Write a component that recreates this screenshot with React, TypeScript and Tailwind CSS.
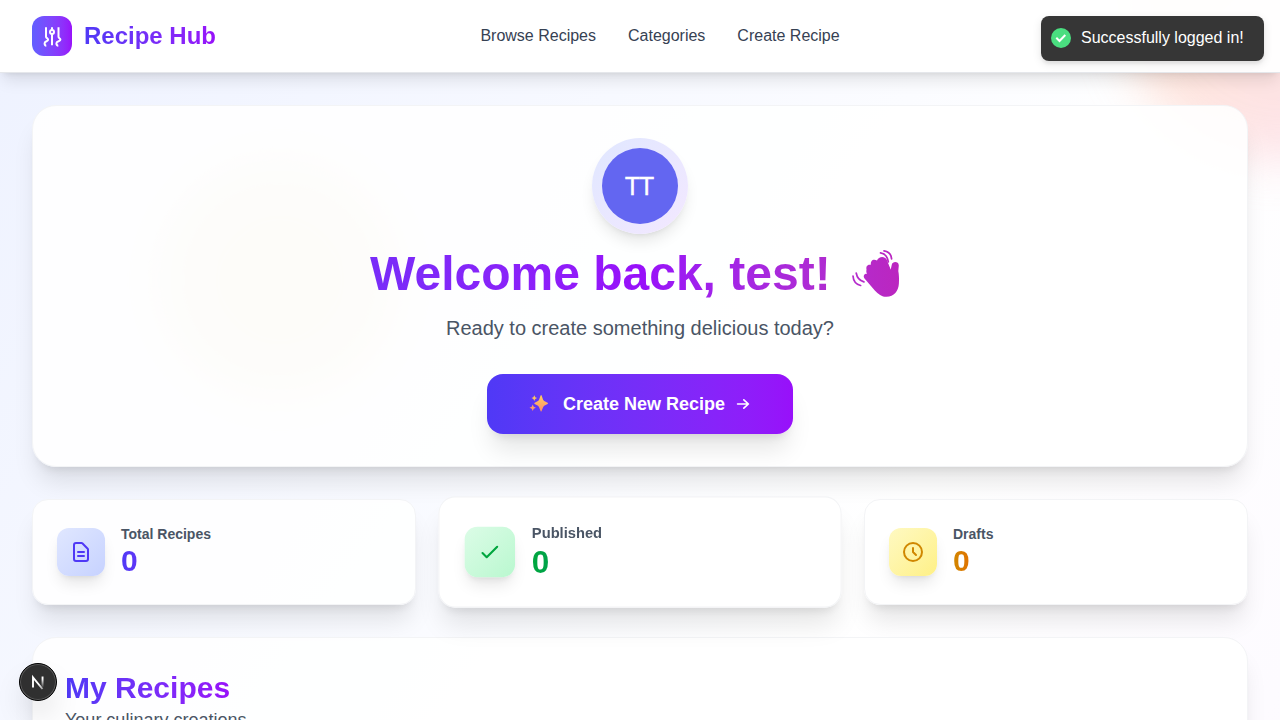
import type { ReactNode } from "react";

const glass = "border border-gray-100 bg-white/90 shadow-xl";

function NavLink({ children }: { children: ReactNode }) {
  return <a className="text-base text-gray-700">{children}</a>;
}

function Header() {
  return (
    <header className="relative z-10 flex h-[73px] items-center justify-between border-b border-gray-200 bg-white/95 px-8 shadow-lg">
      <div className="flex items-center gap-3">
        <div className="flex size-10 items-center justify-center rounded-xl bg-gradient-to-r from-[#615fff] to-[#9810fa]">
          <svg className="size-6" viewBox="0 0 24 24" fill="none" stroke="white" strokeWidth="2">
            <path d="M6 3.300v9.400c0 1.600 2.100 1.400 2.100 3.100s-3.500 1.300-3.500 3.500c0 1.500.7 2.400 1.700 2.400M12 3.300v2.500m0 4.400v11M18.500 3.300v9.400c0 1.600 1.900 1.400 1.900 3.100s-4 1.300-4 3.500c0 1.500.8 2.400 1.900 2.400" />
            <circle cx="12" cy="8" r="2" />
          </svg>
        </div>
        <span className="bg-gradient-to-r from-[#4f39f6] to-[#9810fa] bg-clip-text text-2xl font-bold text-transparent">
          Recipe Hub
        </span>
      </div>
      <nav className="flex gap-8">
        <NavLink>Browse Recipes</NavLink>
        <NavLink>Categories</NavLink>
        <NavLink>Create Recipe</NavLink>
      </nav>
      <div className="w-36" />
    </header>
  );
}

function Toast() {
  return (
    <div className="absolute top-4 right-4 z-20 flex h-[45px] w-[223px] items-center rounded-lg bg-[#363636] pb-0.5 pl-2.5 text-base text-white shadow-[0_3px_10px_rgba(0,0,0,0.1),0_3px_3px_rgba(0,0,0,0.05)]">
      <svg className="size-5" viewBox="0 0 20 20">
        <circle cx="10" cy="10" r="10" fill="#4ade80" />
        <path d="M5.300 9.800l3.200 3.200 5.800-6" fill="none" stroke="white" strokeWidth="2" />
      </svg>
      <span className="ml-2.5 leading-5 whitespace-nowrap">Successfully logged in!</span>
    </div>
  );
}

function WavingHand() {
  return (
    <svg className="inline-block h-12 w-[66px] align-top" viewBox="0 0 66 48" fill="none">
      <defs>
        <linearGradient id="wave" x1="8" y1="0" x2="56" y2="0" gradientUnits="userSpaceOnUse">
          <stop stopColor="#b42bcd" />
          <stop offset="1" stopColor="#bb26bf" />
        </linearGradient>
      </defs>
      <path
        fill="url(#wave)"
        d="M20.500 28.500c-1.800-2.700 0-5.200 2.600-4.700-2-3 .2-6.600 3.700-5.600-1.500-4.500 2.400-8 6.600-5.700 .4-4.500 6-6.400 8.800-2.200 L46.500 19.500c.5-1 .9-2.900 1.200-4.600 .8-3.900 6.900-3.700 7.100.5 L54.300 21c.7 3.500.9 8 .6 12.500C54.500 41 50 46.600 42.500 46.800c-4.800 0-8.300-2.800-11.700-6.400z"
      />
      <path fill="url(#wave)" d="M23 21c-2-5 1-7 4-6-1-4.500 2.500-6.500 6-4.500 1.500-4 7.500-4.800 9.800-.8l3.500 9-12 14z" />
      <path
        stroke="url(#wave)"
        strokeWidth="1.700"
        strokeLinecap="round"
        d="M36.500 2.800c4.300.7 7 4 7.800 9M40 .9c4.500.6 7.300 3.500 7.600 8M12.200 23c.8 4.500 3.500 7.700 7.700 8.900M9 26c.3 4.700 3.200 8.400 7.600 9.500"
      />
    </svg>
  );
}

function Sparkles() {
  return (
    <svg className="mr-3.5 size-5" viewBox="0 0 20 20" fill="url(#spark)">
      <defs>
        <linearGradient id="spark" x1="0" y1="1" x2="0" y2="18" gradientUnits="userSpaceOnUse">
          <stop stopColor="#ffd15c" />
          <stop offset="1" stopColor="#ff8a6b" />
        </linearGradient>
      </defs>
      <path d="M11.600 1.600q.5-1 1 0l1.600 4.300 1 1 3.400 1.900q1 .6 0 1.100l-3.400 1.900-1 1.100-1.600 4.200q-.5 1-1 0L10 12.900l-1-1.100-3.300-1.900q-1-.5 0-1.100L9 6.900l1-1z" />
      <path d="M5.300 1.300l.9 1.900 1.900.9-1.900.9-.9 2-.9-2-1.900-.9 1.900-.9z" />
      <path d="M3.700 10.400l1 2.300 2.200 1-2.200 1-1 2.300-1-2.300-2.200-1 2.200-1z" />
    </svg>
  );
}

function Hero() {
  return (
    <section className={`${glass} flex flex-col items-center rounded-3xl p-8`}>
      <div className="flex size-24 items-center justify-center rounded-full bg-gradient-to-br from-indigo-100 to-purple-100 shadow-lg">
        <div className="flex size-[76px] items-center justify-center rounded-full bg-[#6366f1] pr-px pb-0.5 font-['Open_Sans',sans-serif] text-[26px] font-medium text-white [-webkit-text-stroke:0.5px_white]">
          TT
        </div>
      </div>
      <h1 className="mt-4 h-12 self-stretch bg-gradient-to-r from-[#4f39f6] via-[#9810fa] to-[#e60076] bg-clip-text text-center text-5xl leading-none font-bold text-transparent">
        Welcome back, test! <WavingHand />
      </h1>
      <p className="mt-4 text-xl text-gray-600">Ready to create something delicious today?</p>
      <button className="mt-8 flex h-[60px] w-[306px] items-center justify-center rounded-2xl bg-gradient-to-r from-[#4f39f6] to-[#9810fa] pl-0.5 text-lg font-bold text-white shadow-xl">
        <Sparkles />
        Create New Recipe
        <svg className="ml-2 size-5" viewBox="0 0 24 24" fill="none" stroke="white" strokeWidth="2" strokeLinecap="round" strokeLinejoin="round">
          <path d="M5.500 12h13m-5.500-5 5.500 5-5.500 5" />
        </svg>
      </button>
    </section>
  );
}

interface StatProps {
  label: string;
  card?: string;
  tile: string;
  number: string;
  path: string;
}

function Stat({ label, card = "", tile, number, path }: StatProps) {
  return (
    <div className={`${glass} ${card} flex items-center gap-4 rounded-2xl p-6`}>
      <div className={`flex size-12 items-center justify-center rounded-xl bg-gradient-to-br shadow-lg ${tile}`}>
        <svg className="size-6" viewBox="0 0 24 24" fill="none" stroke="currentColor" strokeWidth="2" strokeLinecap="round" strokeLinejoin="round">
          <path d={path} />
        </svg>
      </div>
      <div>
        <p className="text-sm font-semibold text-gray-600">{label}</p>
        <p className={`bg-gradient-to-r bg-clip-text text-3xl font-bold text-transparent ${number}`}>0</p>
      </div>
    </div>
  );
}

export default function App() {
  return (
    <div className="h-[720px] overflow-hidden">
      <div className="relative h-[1700px] overflow-hidden bg-gradient-to-br from-indigo-50 via-white to-purple-50 font-['Liberation_Sans',Arial,sans-serif]">
        <div className="absolute -top-40 -right-40 size-80 rounded-full bg-gradient-to-br from-orange-200 to-pink-200 opacity-60 blur-xl" />
        <div className="absolute top-40 left-40 size-60 rounded-full bg-[#e8d9b0] opacity-70 blur-xl" />
        <Header />
        <main className="relative flex flex-col gap-8 px-8 pt-8">
          <Hero />
          <div className="grid grid-cols-3 gap-8">
            <Stat
              label="Total Recipes"
              tile="from-indigo-100 to-indigo-200 text-indigo-600"
              number="from-indigo-600 to-purple-600 pb-0.5 leading-[34px]"
              path="M9 12h6m-6 4h6m2 5H7a2 2 0 01-2-2V5a2 2 0 012-2h5.586a1 1 0 01.707.293l5.414 5.414a1 1 0 01.293.707V19a2 2 0 01-2 2z"
            />
            <Stat
              label="Published"
              card="scale-105"
              tile="from-green-100 to-green-200 text-green-600"
              number="from-green-600 to-emerald-600"
              path="M5 13l4 4L19 7"
            />
            <Stat
              label="Drafts"
              tile="from-yellow-100 to-yellow-200 text-yellow-600"
              number="from-yellow-600 to-orange-600 pb-0.5 leading-[34px]"
              path="M12 8v4l3 3m6-3a9 9 0 11-18 0 9 9 0 0118 0z"
            />
          </div>
          <section className={`${glass} h-96 rounded-3xl p-8`}>
            <h2 className="w-fit bg-gradient-to-r from-[#4f39f6] to-[#9810fa] bg-clip-text text-3xl font-bold text-transparent">
              My Recipes
            </h2>
            <p className="text-lg text-gray-600">Your culinary creations</p>
          </section>
        </main>
        <Toast />
        <div className="absolute top-[663px] left-[19px] z-20 flex size-[38px] items-center justify-center rounded-full border border-black bg-[#303030] shadow-[inset_0_0_0_1px_#5a5a5a,0_16px_32px_-8px_rgba(0,0,0,0.24)]">
          <svg className="size-4" viewBox="0 0 16 16" fill="none">
            <defs>
              <linearGradient id="stem" x1="0" y1="5" x2="0" y2="13" gradientUnits="userSpaceOnUse">
                <stop stopColor="white" />
                <stop offset="1" stopColor="white" stopOpacity="0.1" />
              </linearGradient>
              <linearGradient id="diagonal" x1="9" y1="10" x2="14" y2="16" gradientUnits="userSpaceOnUse">
                <stop stopColor="white" />
                <stop offset="1" stopColor="white" stopOpacity="0.4" />
              </linearGradient>
            </defs>
            <path d="M3 13.500V3.500l9.500 11.500" stroke="url(#diagonal)" strokeWidth="1.900" />
            <path d="M11.600 2.500h1.900v10.500h-1.900z" fill="url(#stem)" />
          </svg>
        </div>
      </div>
    </div>
  );
}
